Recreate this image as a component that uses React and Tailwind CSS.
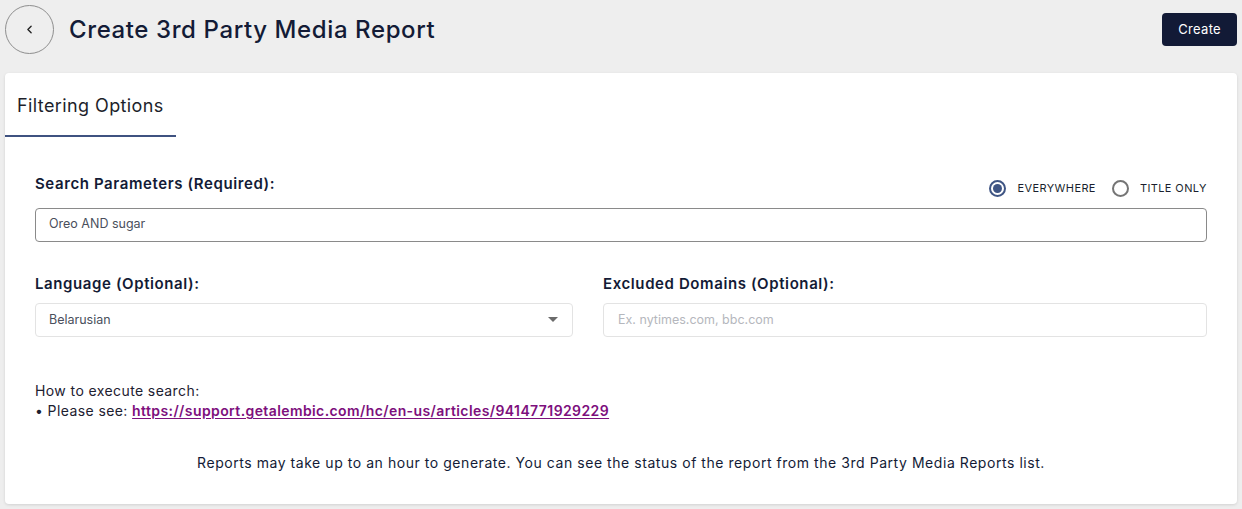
import { ChevronLeft } from "lucide-react";

const Radio = ({ checked, label }) => (
  <label className="flex items-center gap-[11px] text-[11px] text-[#1a1f2e] tracking-[0.4px]">
    <span
      className={`flex items-center justify-center w-[17px] h-[17px] rounded-full border-2 ${
        checked ? "border-[#3f5584]" : "border-[#757575]"
      }`}
    >
      {checked && <span className="w-[9px] h-[9px] rounded-full bg-[#3f5584]" />}
    </span>
    {label}
  </label>
);

const App = () => {
  return (
    <div className="w-[1242px] h-[509px] bg-[#eeeeee] overflow-hidden font-['Inter',sans-serif]">
      {/* header */}
      <div className="flex items-start justify-between px-[5px] pt-[5px] h-[73px]">
        <div className="flex items-center gap-[15px]">
          <button className="w-[49px] h-[49px] rounded-full border border-[#8e8e8e] flex items-center justify-center text-[#222]">
            <ChevronLeft className="w-[13px] h-[13px]" strokeWidth={2.5} />
          </button>
          <h1 className="text-[24px] font-medium text-[#131b36] tracking-[0.6px]">
            Create 3rd Party Media Report
          </h1>
        </div>
        <button className="mt-[8px] h-[33px] px-[16px] rounded-[4px] bg-[#121a36] text-white text-[13px] tracking-[0.3px]">
          Create
        </button>
      </div>

      {/* card */}
      <div className="mx-[5px] bg-white rounded-[4px] shadow-[0_1px_3px_rgba(0,0,0,0.12)] h-[431px]">
        <div className="flex">
          <div className="w-[171px] h-[64px] flex items-center pl-[12px] border-b-2 border-[#3f5280]">
            <span className="text-[18px] text-[#1d1f2b] mt-[2px] tracking-[0.4px]">Filtering Options</span>
          </div>
        </div>

        <div className="px-[30px] pt-[36px]">
          <div className="flex items-end justify-between">
            <div className="text-[15px] font-semibold text-[#131b36] tracking-[0.6px]">Search Parameters (Required):</div>
            <div className="flex items-center gap-[16px] mb-[-1px]">
              <Radio checked label="EVERYWHERE" />
              <Radio label="TITLE ONLY" />
            </div>
          </div>
          <div className="mt-[12px] h-[34px] rounded-[4px] border border-[#8a8a8a] flex items-center px-[13px] text-[12.5px] text-[#4a4f5c]">
            Oreo AND sugar
          </div>

          <div className="mt-[31px] grid grid-cols-[538px_1fr] gap-[30px]">
            <div>
              <div className="text-[15px] font-semibold text-[#131b36] tracking-[0.6px]">Language (Optional):</div>
              <div className="mt-[8px] h-[34px] rounded-[4px] border border-[#e3e3e3] flex items-center justify-between pl-[13px] pr-[14px] text-[12.5px] text-[#4a4f5c]">
                Belarusian
                <svg width="10" height="6" viewBox="0 0 10 6">
                  <path d="M0 0h10L5 5z" fill="#6b6b6b" />
                </svg>
              </div>
            </div>
            <div>
              <div className="text-[15px] font-semibold text-[#131b36] tracking-[0.6px]">Excluded Domains (Optional):</div>
              <div className="mt-[8px] h-[34px] rounded-[4px] border border-[#e3e3e3] flex items-center px-[14px] text-[12.5px] text-[#b5b7bd]">
                Ex. nytimes.com, bbc.com
              </div>
            </div>
          </div>

          <div className="mt-[44px] text-[14px] text-[#1d2030] leading-[20px] tracking-[0.4px]">
            <div>How to execute search:</div>
            <div>
              • Please see:{" "}
              <a
                href="#"
                className="font-semibold text-[#7d0f7d] underline underline-offset-2"
              >
                https://support.getalembic.com/hc/en-us/articles/9414771929229
              </a>
            </div>
          </div>

          <div className="mt-[31px] text-center text-[14px] text-[#131b36] tracking-[0.55px]">
            Reports may take up to an hour to generate. You can see the status of the report from the 3rd Party Media Reports list.
          </div>
        </div>
      </div>
    </div>
  );
};

export default App;
